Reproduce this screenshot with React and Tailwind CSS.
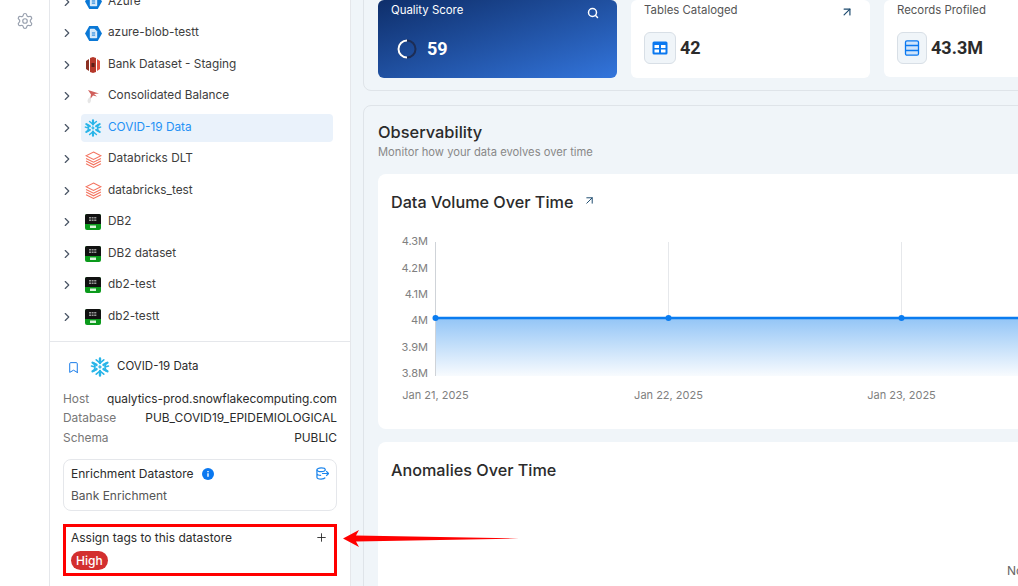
import React from 'react';
import { ChevronRight, Settings, Search, ArrowUpRight, Bookmark, Plus } from 'lucide-react';

const AzureIcon = () => (
  <svg viewBox="0 0 16 16" className="w-[17px] h-[17px]">
    <path d="M4 1h8l4 7-4 7H4L0 8z" fill="#0a78d6" />
    <path d="M5 4h4l2 2v6H5z" fill="#cfe6fa" stroke="#fff" strokeWidth="0.8" />
    <path d="M6.500 7.500h3M6.500 9.500h3" stroke="#0a78d6" strokeWidth="0.9" />
  </svg>
);

const RedshiftIcon = () => (
  <svg viewBox="0 0 16 16" className="w-4 h-4">
    <path d="M1 4l3-2v12l-3-2z" fill="#8c3123" />
    <path d="M15 4l-3-2v12l3-2z" fill="#e05243" />
    <path d="M5 1l3-1 3 1v14l-3 1-3-1z" fill="#b5382a" />
    <rect x="6.500" y="6" width="3" height="4" fill="#5e1f18" />
  </svg>
);

const BirdIcon = () => (
  <svg viewBox="0 0 16 16" className="w-4 h-4">
    <path d="M3 2l11 3.500-5 0.500 3 2.500-4-1-3 4 1-5z" fill="#d0605c" />
    <path d="M4 15.500c-2.500-1.500-1.500-5 1-6.500 1.500 2 1.500 5-1 6.500z" fill="#e6e6e6" />
  </svg>
);

const SnowflakeIcon = ({ size = 'w-[18px] h-[18px]' }) => (
  <svg viewBox="0 0 20 20" className={size} fill="none" stroke="#29b5e8" strokeWidth="2.400" strokeLinecap="round">
    <path d="M10 1.500v4.500M10 14v4.500M2.600 5.700l3.900 2.200M13.500 12.100l3.900 2.200M2.600 14.300l3.900-2.200M13.500 7.900l3.900-2.200" />
    <path d="M6.200 2.800L10 6l3.800-3.200M6.200 17.200L10 14l3.800 3.200" strokeWidth="1.600" />
    <path d="M1.500 9l3.500 1-0.800 3.600M18.500 9L15 10l0.800 3.600M4.200 6.400L5 10M15.800 6.400L15 10" strokeWidth="1.600" />
    <path d="M10 8.400l1.500 1.600-1.500 1.600-1.500-1.600z" fill="#29b5e8" strokeWidth="0.600" />
  </svg>
);

const DatabricksIcon = () => (
  <svg viewBox="0 0 16 16" className="w-[17px] h-[17px]" fill="none" stroke="#f4735f" strokeWidth="1">
    <path d="M8 1l7 3.500L8 8 1 4.500z" />
    <path d="M1 7l7 3.500L15 7M1 9.500L8 13l7-3.500M1 12l7 3.500 7-3.500" />
  </svg>
);

const Db2Icon = () => (
  <svg viewBox="0 0 16 16" className="w-4 h-4">
    <rect width="16" height="16" rx="2" fill="#0b9a1c" />
    <path d="M0 2a2 2 0 012-2h12a2 2 0 012 2v8H0z" fill="#111" />
    <path d="M4 3.500h8M4 5h8M4 6.500h8" stroke="#bbb" strokeWidth="0.800" strokeDasharray="2 0.600" />
    <rect x="5" y="11.500" width="6" height="2.500" fill="#d8f5da" />
  </svg>
);

const datastores = [
  { name: 'Azure', icon: AzureIcon },
  { name: 'azure-blob-testt', icon: AzureIcon },
  { name: 'Bank Dataset - Staging', icon: RedshiftIcon },
  { name: 'Consolidated Balance', icon: BirdIcon },
  { name: 'COVID-19 Data', icon: SnowflakeIcon, active: true },
  { name: 'Databricks DLT', icon: DatabricksIcon },
  { name: 'databricks_test', icon: DatabricksIcon },
  { name: 'DB2', icon: Db2Icon },
  { name: 'DB2 dataset', icon: Db2Icon },
  { name: 'db2-test', icon: Db2Icon },
  { name: 'db2-testt', icon: Db2Icon },
];

const details = [
  ['Host', 'qualytics-prod.snowflakecomputing.com'],
  ['Database', 'PUB_COVID19_EPIDEMIOLOGICAL'],
  ['Schema', 'PUBLIC'],
];

const VolumeChart = () => (
  <svg viewBox="0 0 640 170" className="w-[640px] h-[170px] shrink-0" fontFamily="Inter, sans-serif" fontSize="11" fill="#808080">
    <defs>
      <linearGradient id="volumeFill" x1="0" y1="0" x2="0" y2="1">
        <stop offset="0%" stopColor="#91c4f6" />
        <stop offset="100%" stopColor="#f8fbfe" />
      </linearGradient>
    </defs>
    {[44.5, 277.5, 510.5].map((x) => (
      <line key={x} x1={x} x2={x} y1="11" y2="145" stroke="#e6e8eb" />
    ))}
    <rect x="45" y="86" width="595" height="59" fill="url(#volumeFill)" />
    <line x1="44.500" x2="44.500" y1="11" y2="145" stroke="#cfd3d8" />
    <line x1="44" x2="640" y1="87" y2="87" stroke="#0a7cf0" strokeWidth="2.500" />
    {[44.5, 277.5, 510.5].map((x) => (
      <circle key={x} cx={x} cy="87" r="3" fill="#0a7cf0" />
    ))}
    {[['4.3M', 14], ['4.2M', 41], ['4.1M', 67], ['4M', 93], ['3.9M', 120], ['3.8M', 146]].map(([label, y]) => (
      <text key={label} x="37" y={y} textAnchor="end">{label}</text>
    ))}
    {[['Jan 21, 2025', 44.5], ['Jan 22, 2025', 277.5], ['Jan 23, 2025', 510.5]].map(([label, x]) => (
      <text key={label} x={x} y="168" textAnchor="middle">{label}</text>
    ))}
  </svg>
);

const App = () => {
  return (
    <div className="relative flex w-[1018px] h-[586px] overflow-hidden bg-white font-['Inter',sans-serif]">
      {/* Left rail */}
      <div className="w-[50px] shrink-0 border-r border-gray-200 flex justify-center pt-3">
        <Settings className="w-[18px] h-[18px] text-gray-400" strokeWidth={1.6} />
      </div>

      {/* Datastore tree and details */}
      <div className="w-[301px] shrink-0 border-r border-gray-200 flex flex-col">
        <div className="-mt-[14px] pl-[10px] pr-[17px] pb-[8px] border-b border-gray-200">
          {datastores.map((item) => (
            <div key={item.name} className="flex items-center h-[31.500px]">
              <ChevronRight className="w-[14px] h-[14px] text-gray-600 shrink-0 mr-[7px]" strokeWidth={2} />
              <div className={`flex-1 h-[28px] flex items-center gap-[6px] pl-[3px] rounded ${item.active ? 'bg-[#eaf2fb] text-[#2491f5]' : 'text-[#3d3d3d]'}`}>
                <span className="w-[18px] flex justify-center"><item.icon /></span>
                <span className="text-[11.800px]">{item.name}</span>
              </div>
            </div>
          ))}
        </div>

        <div className="px-[13px] pt-[14px]">
          <div className="flex items-center h-[23px]">
            <Bookmark className="w-[13px] h-[13px] text-[#1278e8] ml-1" strokeWidth={1.8} />
            <span className="ml-[10px]"><SnowflakeIcon size="w-5 h-5" /></span>
            <span className="ml-[7px] text-[11.500px] text-[#2b2b2b]">COVID-19 Data</span>
          </div>
          <div className="mt-[12px] flex flex-col gap-[3.500px]">
            {details.map(([label, value]) => (
              <div key={label} className="flex justify-between items-center h-4 text-[11.900px]">
                <span className="text-[#777]">{label}</span>
                <span className="text-[#2b2b2b]">{value}</span>
              </div>
            ))}
          </div>
          <div className="mt-[13px] h-[52px] rounded-lg border border-gray-200 px-[7px] pt-[5px]">
            <div className="flex items-center h-[18px]">
              <span className="text-xs text-[#2b2b2b]">Enrichment Datastore</span>
              <svg viewBox="0 0 12 12" className="w-3 h-3 ml-2">
                <circle cx="6" cy="6" r="6" fill="#0a78f0" />
                <path d="M6 5.200v3.600M6 3v1.200" stroke="#fff" strokeWidth="1.400" />
              </svg>
              <svg viewBox="0 0 14 14" className="w-[13px] h-[13px] ml-auto" fill="none" stroke="#1a84ec" strokeWidth="1.300">
                <ellipse cx="5.500" cy="3" rx="4.500" ry="2" />
                <path d="M1 3v8c0 1 2 2 4.500 2s4-0.800 4.500-1.500M1 7c0 1 2 2 4.500 2M6.500 7h7M11 4.500L13.500 7 11 9.500" />
              </svg>
            </div>
            <div className="mt-[5px] text-xs text-[#555]">Bank Enrichment</div>
          </div>
          <div className="mt-[18px] pl-[8px] pr-[9px]">
            <div className="flex items-center justify-between h-[18px]">
              <span className="text-xs text-[#2b2b2b]">Assign tags to this datastore</span>
              <Plus className="w-[13px] h-[13px] text-[#222]" strokeWidth={1.6} />
            </div>
            <span className="inline-flex items-center h-[19px] mt-[3px] px-[5px] rounded-full bg-[#d32f2f] text-white text-xs font-medium">High</span>
          </div>
        </div>
      </div>

      {/* Main content */}
      <div className="flex-1 min-w-0 bg-[#f0f5f9] pl-3">
        <div className="-mt-[30px] w-[800px] h-[121px] border border-[#dfe4e9] rounded-lg px-[14px] pt-[30px] flex gap-[14px] box-border">
          <div className="w-[239px] shrink-0 h-[78px] rounded-md bg-gradient-to-br from-[#0f2f6b] to-[#3375dc] text-white px-[13px] -mt-[1px] box-border">
            <div className="flex items-end justify-between h-[19px]">
              <span className="text-[11.400px]">Quality Score</span>
              <Search className="w-3 h-3 mr-[5px]" strokeWidth={3} />
            </div>
            <div className="flex items-center gap-[10px] mt-[16px] ml-[6px]">
              <svg viewBox="0 0 20 20" className="w-5 h-5" fill="none" strokeWidth="2">
                <circle cx="10" cy="10" r="8.500" stroke="#1d2d55" />
                <path d="M10 1.500A8.500 8.500 0 0010 18.500" stroke="#fff" />
              </svg>
              <span className="text-lg font-bold font-['Roboto',sans-serif]">59</span>
            </div>
          </div>
          <div className="w-[239px] shrink-0 h-[78px] rounded-md bg-white px-[13px] -mt-[1px] box-border">
            <div className="flex items-end justify-between h-[19px]">
              <span className="text-[11.400px] text-[#555]">Tables Cataloged</span>
              <ArrowUpRight className="w-[14px] h-[14px] text-[#1c4a6e] mr-[3px]" strokeWidth={2} />
            </div>
            <div className="flex items-center gap-[4px] mt-[13px]">
              <div className="w-8 h-8 rounded-md border border-[#d8dfe6] bg-[#f0f5f9] flex items-center justify-center">
                <svg viewBox="0 0 16 16" className="w-4 h-4">
                  <rect x="0.500" y="1.500" width="15" height="13" rx="1.500" fill="#0a78f0" />
                  <path d="M2.500 5h4.500v3H2.500zM9 5h4.500v3H9zM2.500 9.500h4.500v3H2.500zM9 9.500h4.500v3H9z" fill="#fff" />
                </svg>
              </div>
              <span className="text-lg font-bold font-['Roboto',sans-serif] text-[#2b2b2b]">42</span>
            </div>
          </div>
          <div className="w-[239px] shrink-0 h-[77px] rounded-md bg-white px-[13px] -mt-[1px] box-border">
            <div className="flex items-end h-[19px]">
              <span className="text-[11.400px] text-[#555]">Records Profiled</span>
            </div>
            <div className="flex items-center gap-[4px] mt-[13px]">
              <div className="w-[30px] h-8 rounded-md border border-[#d8dfe6] bg-[#f0f5f9] flex items-center justify-center">
                <svg viewBox="0 0 16 16" className="w-4 h-4" fill="#cfe4fb" stroke="#0a78f0" strokeWidth="1.300">
                  <rect x="1.500" y="0.800" width="13" height="14.400" rx="1.500" />
                  <path d="M1.500 5.500h13M1.500 10.500h13" />
                </svg>
              </div>
              <span className="text-lg font-bold font-['Roboto',sans-serif] text-[#2b2b2b]">43.3M</span>
            </div>
          </div>
        </div>

        <div className="mt-[14px] w-[800px] h-[520px] border border-[#dfe4e9] rounded-lg px-[14px] pt-[15px] box-border">
          <h2 className="text-[16.400px] leading-[23px] font-medium text-[#2b2b2b]">Observability</h2>
          <p className="text-[11.200px] leading-[17px] text-[#888]">Monitor how your data evolves over time</p>
          <div className="mt-[13px] h-[255px] rounded-lg bg-white px-[13px] pt-[16px]">
            <div className="flex items-center h-[24px]">
              <span className="text-[16.200px] font-medium text-[#2b2b2b]">Data Volume Over Time</span>
              <ArrowUpRight className="w-[13px] h-[13px] text-[#1c4a6e] ml-[10px] -mt-1" strokeWidth={1.8} />
            </div>
            <div className="mt-[17px]"><VolumeChart /></div>
          </div>
          <div className="mt-[13px] h-[200px] rounded-lg bg-white px-[13px] pt-[16px] flex flex-col">
            <span className="text-[16.200px] font-medium leading-6 text-[#2b2b2b]">Anomalies Over Time</span>
            <span className="mt-[81px] ml-[616px] text-xs text-[#666] whitespace-nowrap">No data</span>
          </div>
        </div>
      </div>

      {/* Red annotation box and arrow */}
      <div className="absolute left-[63px] top-[524px] w-[274px] h-[52px] border-[3px] border-[#ff0000] pointer-events-none" />
      <svg viewBox="0 0 176 18" className="absolute left-[343px] top-[530px] w-[176px] h-[18px]">
        <path d="M0 8.500L16 0 13 5.500 176 8.500 13 11.500 16 17z" fill="#ff0000" />
      </svg>
    </div>
  );
};

export default App;
